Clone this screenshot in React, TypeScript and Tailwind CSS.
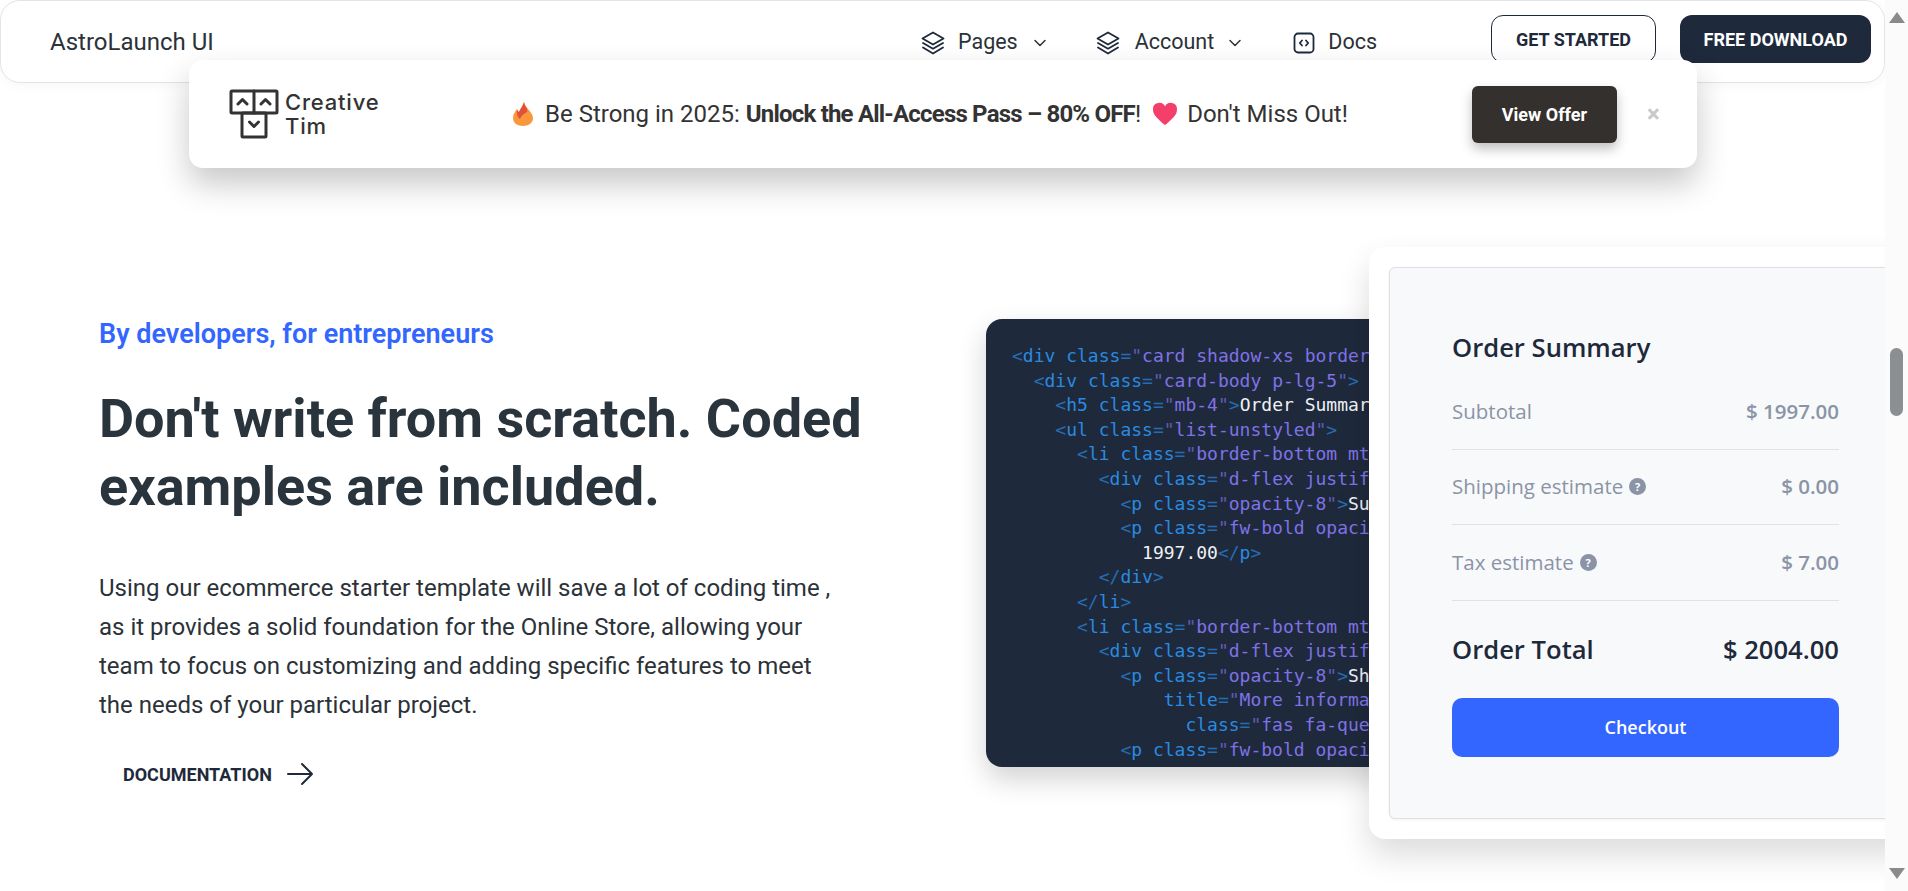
import { ChevronDown } from "lucide-react";

function StackIcon() {
  return (
    <svg width="24" height="24" viewBox="0 0 24 24" fill="none" stroke="#1e293b" strokeWidth="1.8" strokeLinejoin="round" strokeLinecap="round">
      <path d="M12 1.500 22.500 7.500 12 13.500 1.500 7.500z" />
      <path d="M2 12l10 5.700L22 12" />
      <path d="M2 16.500l10 6 10-6" />
    </svg>
  );
}

function DocsIcon() {
  return (
    <svg width="24" height="24" viewBox="0 0 24 24" fill="none" stroke="#1e293b" strokeWidth="1.8" strokeLinejoin="round" strokeLinecap="round">
      <rect x="2.500" y="2.500" width="19" height="19" rx="3.500" />
      <path d="M10 9.500 7.800 12l2.200 2.500M14 9.500l2.200 2.500-2.200 2.500" />
    </svg>
  );
}

function HelpDot() {
  return (
    <span className="inline-flex h-[17px] w-[17px] items-center justify-center rounded-full bg-[#8a94a6] text-[11px] font-bold leading-none text-white">?</span>
  );
}

function CreativeTimLogo() {
  return (
    <div className="flex w-[150px] shrink-0 items-center gap-[6px]">
      <svg width="50" height="50" viewBox="0 0 50 50" fill="none" stroke="#333" strokeWidth="3" strokeLinecap="round" strokeLinejoin="round" className="shrink-0">
        <rect x="2" y="2" width="46" height="22" rx="1" />
        <path d="M25 2v22" />
        <rect x="13" y="24" width="24" height="24" rx="1" />
        <path d="M9 15l4.500-4.500L18 15M32 15l4.500-4.500L41 15M20.500 33l4.500 4.500 4.500-4.500" />
      </svg>
      <div className="font-['Inter',sans-serif] text-[22px] font-medium leading-[24px] tracking-[0.8px] text-[#333]">
        <div>Creative</div>
        <div>Tim</div>
      </div>
    </div>
  );
}

// [indent in ch, segments]
type Seg = [string, string];
const t = "text-[#2a8ae0]";
const v = "text-[#7f72e6]";
const w = "text-[#eef1f5]";
const codeLines: [number, Seg[]][] = [
  [0, [["<div class=", t], ['"card shadow-xs border', v]]],
  [2, [["<div class=", t], ['"card-body p-lg-5"', v], [">", t]]],
  [4, [["<h5 class=", t], ['"mb-4"', v], [">", t], ["Order Summar", w]]],
  [4, [["<ul class=", t], ['"list-unstyled"', v], [">", t]]],
  [6, [["<li class=", t], ['"border-bottom mt', v]]],
  [8, [["<div class=", t], ['"d-flex justif', v]]],
  [10, [["<p class=", t], ['"opacity-8"', v], [">", t], ["Su", w]]],
  [10, [["<p class=", t], ['"fw-bold opaci', v]]],
  [12, [["1997.00", w], ["</p>", t]]],
  [8, [["</div>", t]]],
  [6, [["</li>", t]]],
  [6, [["<li class=", t], ['"border-bottom mt', v]]],
  [8, [["<div class=", t], ['"d-flex justif', v]]],
  [10, [["<p class=", t], ['"opacity-8"', v], [">", t], ["Sh", w]]],
  [14, [["title=", t], ['"More informa', v]]],
  [16, [["class=", t], ['"fas fa-que', v]]],
  [10, [["<p class=", t], ['"fw-bold opaci', v]]],
];

// punctuation sits dimmer than the words in the highlighted code
function Token({ text, color }: { text: string; color: string }) {
  return (
    <span className={color}>
      {text.split(/([<>=/"]+)/).map((part, i) =>
        /^[<>=/"]+$/.test(part) ? <span key={i} className="opacity-70">{part}</span> : part
      )}
    </span>
  );
}

function SummaryRow({ label, value, help }: { label: string; value: string; help?: boolean }) {
  return (
    <div className="flex h-[75.5px] items-center justify-between border-b border-[#dfe2e7] text-[20.5px] text-[#8a94a6]">
      <span className="flex items-center gap-[6px]">
        {label}
        {help && <HelpDot />}
      </span>
      <span className="font-semibold">{value}</span>
    </div>
  );
}

export default function App() {
  return (
    <div className="flex h-[891px] w-full overflow-hidden bg-white font-['Roboto',sans-serif]">
      <div className="relative min-w-0 flex-1 overflow-hidden">
        {/* Navbar */}
        <nav className="flex h-[83px] items-center justify-between rounded-[20px] border border-[#e2e4e8] bg-white pl-[49px] pr-[13px] shadow-[0_2px_12px_rgba(0,0,0,0.04)]">
          <span className="text-[24px] text-[#2b3238]">AstroLaunch UI</span>
          <div className="flex items-center">
            <div className="mr-[114px] flex items-center pt-[2px] text-[21.5px] text-[#2b3238]">
              <StackIcon />
              <span className="ml-[13px]">Pages</span>
              <ChevronDown size={20} className="ml-[12px] mr-[46px]" strokeWidth={1.8} />
              <StackIcon />
              <span className="ml-[15px]">Account</span>
              <ChevronDown size={20} className="ml-[11px] mr-[47px]" strokeWidth={1.8} />
              <DocsIcon />
              <span className="ml-[12px]">Docs</span>
            </div>
            <button className="-mt-[5px] mr-[24px] h-[48px] w-[165px] rounded-[12px] border border-[#1e293b] text-[18px] font-bold text-[#1e293b]">GET STARTED</button>
            <button className="-mt-[5px] h-[48px] w-[191px] rounded-[12px] bg-[#1e293b] text-[18px] font-bold text-white">FREE DOWNLOAD</button>
          </div>
        </nav>

        {/* Promo banner */}
        <div className="absolute left-[189px] top-[60px] flex h-[108px] w-[1508px] items-center rounded-[14px] bg-white pl-[40px] shadow-[0_16px_32px_rgba(0,0,0,0.22)]">
          <CreativeTimLogo />
          <div className="ml-[134px] flex w-[959px] shrink-0 items-center text-[24px] text-[#333]">
            <svg width="20" height="24" viewBox="0 0 20 24" className="mr-[12px] shrink-0">
              <path d="M11 0c.5 3 2 4 4 7 3 3.500 5 6 5 9.500C20 21 15.500 24 10 24S0 21 0 16c0-4 2-6 4-9 .5 1.500 1 2.500 2 3 1-3 4-6 5-10z" fill="#f9973d" />
              <path d="M11 0c.5 3 1.500 4 3 7 .5 1.500.5 3-.5 3.500C11 11.500 8 14 7 17c-1.500-1-3-3-3-6 0-1.500 0-3 0-4 .5 1.500 1 2.500 2 3 1-3 4-6 5-10z" fill="#e2503a" />
            </svg>
            <span>Be Strong in 2025:&nbsp;</span>
            <span className="font-bold tracking-[-0.8px]">Unlock the All-Access Pass – 80% OFF</span>
            <span>!</span>
            <svg width="26" height="24" viewBox="0 0 28 26" className="ml-[11px] mr-[9px] shrink-0">
              <path d="M14 25C6 18 1 14 1 8a6.800 6.800 0 0 1 13-3 6.800 6.800 0 0 1 13 3c0 6-5 10-13 17z" fill="#f43f6b" />
            </svg>
            <span>Don't Miss Out!</span>
          </div>
          <button className="h-[57px] w-[145px] shrink-0 rounded-[6px] bg-[#33302e] text-[18px] font-bold text-white shadow-[0_6px_12px_rgba(0,0,0,0.25)]">View Offer</button>
          <span className="ml-[30px] text-[24px] font-bold leading-none text-[#c8c8c8]">×</span>
        </div>

        {/* Feature section */}
        <section className="flex pt-[164px]">
          <div className="ml-[99px] w-[887px] shrink-0 pt-[69px]">
            <p className="text-[27px] font-semibold leading-[36px] text-[#3366ff]">By developers, for entrepreneurs</p>
            <h2 className="mt-[33px] text-[54px] font-bold leading-[68px] text-[#29343c]">Don't write from scratch. Coded<br />examples are included.</h2>
            <p className="mt-[48px] w-[800px] text-[24px] leading-[39px] text-[#2b3238]">
              Using our ecommerce starter template will save a lot of coding time ,<br />
              as it provides a solid foundation for the Online Store, allowing your<br />
              team to focus on customizing and adding specific features to meet<br />
              the needs of your particular project.
            </p>
            <div className="ml-[24px] mt-[35px] flex items-center text-[18px] font-bold text-[#1e293b]">
              DOCUMENTATION
              <svg width="28" height="28" viewBox="0 0 28 28" fill="none" stroke="#1e293b" strokeWidth="2" strokeLinecap="round" strokeLinejoin="round" className="ml-[14px]">
                <path d="M2 14h24M16 4l10 10-10 10" />
              </svg>
            </div>
          </div>

          <div className="flex shrink-0 items-start">
            <div className="mt-[72px] h-[448px] w-[420px] shrink-0 overflow-hidden rounded-l-[16px] bg-[#1e293b] pl-[26px] pt-[25px] font-['DejaVu_Sans_Mono',monospace] text-[18px] leading-[24.6px] shadow-[0_12px_28px_rgba(0,0,0,0.18)]">
              {codeLines.map(([indent, segs], i) => (
                <div key={i} className="whitespace-pre">
                  {" ".repeat(indent)}
                  {segs.map(([s, c], j) => (
                    <Token key={j} text={s} color={c} />
                  ))}
                </div>
              ))}
            </div>
            <div className="-ml-[37px] relative w-[556px] shrink-0 rounded-[16px] bg-white p-[20px] shadow-[0_16px_32px_rgba(0,0,0,0.14)]">
              <div className="h-[552px] rounded-[6px] border border-[#dde0e5] bg-[#f8f9fb] pl-[62px] pr-[65px] pt-[62px] font-['Open_Sans',sans-serif] shadow-[0_1px_3px_rgba(0,0,0,0.06)]">
                <h3 className="mb-[8px] text-[25.6px] font-semibold leading-[36px] text-[#1e293b]">Order Summary</h3>
                <SummaryRow label="Subtotal" value="$ 1997.00" />
                <SummaryRow label="Shipping estimate" value="$ 0.00" help />
                <SummaryRow label="Tax estimate" value="$ 7.00" help />
                <div className="flex h-[97px] items-center justify-between pt-[2px] text-[25.6px] font-semibold text-[#1e293b]">
                  <span>Order Total</span>
                  <span>$ 2004.00</span>
                </div>
                <button className="h-[59px] w-full rounded-[10px] bg-[#3366ff] text-[18px] font-semibold text-white">Checkout</button>
              </div>
            </div>
          </div>
        </section>
      </div>

      {/* Browser scrollbar */}
      <aside className="flex w-[23px] shrink-0 flex-col items-center justify-between bg-[#fbfbfb] pb-[12px] pt-[12px]">
        <span className="h-0 w-0 border-x-[8px] border-b-[11px] border-x-transparent border-b-[#8a8a8a]" />
        <span className="absolute right-[5px] top-[348px] h-[68px] w-[13px] rounded-full bg-[#8c8f92]" />
        <span className="h-0 w-0 border-x-[8px] border-t-[11px] border-x-transparent border-t-[#8a8a8a]" />
      </aside>
    </div>
  );
}
